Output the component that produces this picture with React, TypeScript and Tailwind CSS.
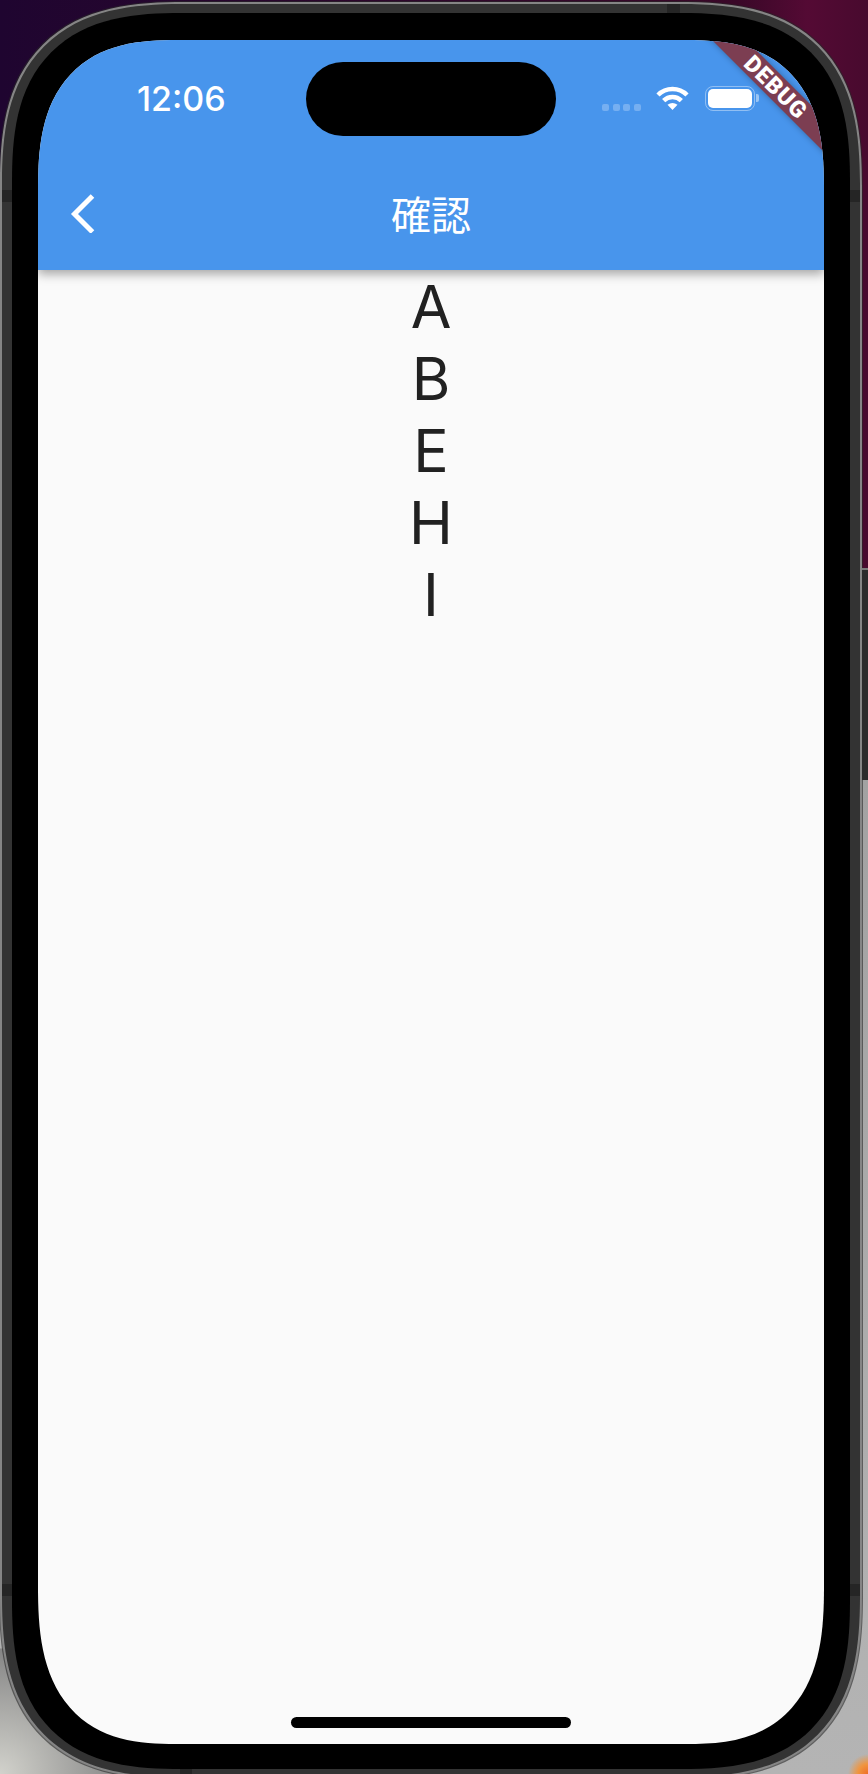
export default function App() {
  return (
    <div className="flex w-[868px] h-[1774px] overflow-hidden font-['Inter','Noto_Sans_CJK_JP',sans-serif] bg-[radial-gradient(circle_at_868px_1774px,#ee6f28_0,#f0953f_10px,transparent_20px),radial-gradient(circle_at_0_1774px,#d2d2cc_0,#858585_125px,transparent_126px),linear-gradient(180deg,transparent_780px,#a2a2a2_780px,#b4b4b4_100%),linear-gradient(90deg,#1f0530_0%,#3a0828_85%,#540a34_93%,#480a2e_100%)]">
      <div className="shrink-0 w-[862px] h-[1777px] mt-[2px] rounded-[185px] [corner-shape:superellipse(1.4)] border-2 border-[#858585] [background:linear-gradient(#252525,#252525)_665px_0/13px_9px_no-repeat,linear-gradient(#252525,#252525)_178px_1765px/12px_12px_no-repeat,linear-gradient(#252525,#252525)_0_186px/10px_12px_no-repeat,linear-gradient(#252525,#252525)_848px_186px/10px_12px_no-repeat,linear-gradient(#252525,#252525)_0_1580px/10px_12px_no-repeat,linear-gradient(#252525,#252525)_848px_1580px/10px_12px_no-repeat,#333333] pt-[9px] px-[10px] shadow-[0_0_0_1px_rgba(40,40,40,0.6)]">
        <div className="w-[838px] h-[1756px] rounded-[170px] [corner-shape:superellipse(1.4)] bg-black pt-[27px] px-[26px]">
          <div className="relative w-[786px] h-[1704px] overflow-hidden rounded-t-[140px_150px] rounded-b-[138px_158px] [corner-shape:superellipse(1.4)] bg-[#fafafa] flex flex-col">
            <header className="h-[230px] shrink-0 bg-[#4895ec] flex flex-col shadow-[0_4px_10px_rgba(0,0,0,0.35)] z-10">
              <div className="flex pt-[22px]">
                <div className="w-[268px] h-[74px] flex items-center pl-[99px]">
                  <span className="text-white text-[34px] font-medium leading-none">12:06</span>
                </div>
                <div className="w-[250px] h-[74px] rounded-full bg-black" />
                <div className="w-[268px] h-[74px] flex items-center pl-[46px]">
                  <div className="flex gap-[3.7px] mt-[17px]">
                    <span className="w-[7px] h-[7px] rounded-[2px] bg-white/25" />
                    <span className="w-[7px] h-[7px] rounded-[2px] bg-white/25" />
                    <span className="w-[7px] h-[7px] rounded-[2px] bg-white/25" />
                    <span className="w-[7px] h-[7px] rounded-[2px] bg-white/25" />
                  </div>
                  <svg viewBox="0 0 33 24" className="w-[33px] h-[24px] ml-[15px] mt-[-2px]">
                    <path d="M2 9A20.5 20.5 0 0 1 31 9" fill="none" stroke="#fff" strokeWidth="4.5" />
                    <path d="M7.66 14.66A12.5 12.5 0 0 1 25.34 14.66" fill="none" stroke="#fff" strokeWidth="4.5" />
                    <path d="M16.5 24L11.5 18.8Q16.5 15.2 21.5 18.8Z" fill="#fff" />
                  </svg>
                  <div className="flex items-center ml-[16px] mt-[-2px]">
                    <div className="w-[50px] h-[25px] rounded-[8px] border-[1.5px] border-white/40 p-[2px]">
                      <div className="w-full h-full rounded-[5px] bg-white" />
                    </div>
                    <span className="w-[3px] h-[8px] ml-[1px] rounded-r-[2px] bg-white/45" />
                  </div>
                </div>
              </div>
              <div className="grid grid-cols-3 h-[72px] mt-[42px] items-center">
                <div className="pl-[31px]">
                  <svg viewBox="0 0 26 40" className="w-[26px] h-[40px] block mt-[-2px]">
                    <path d="M23.5 3L5.5 21L23.5 39" fill="none" stroke="#fff" strokeWidth="5" />
                  </svg>
                </div>
                <div className="text-center text-white text-[40px] leading-none font-['Noto_Sans_CJK_JP',sans-serif] font-normal mt-[-3px]">確認</div>
                <div />
              </div>
            </header>
            <main className="flex flex-col items-center pt-[1px] text-[#212121] text-[59px] leading-[72px]">
              <span>A</span>
              <span>B</span>
              <span>E</span>
              <span>H</span>
              <span>I</span>
            </main>
            <div className="mt-auto mb-[16px] mx-auto w-[280px] h-[11px] rounded-full bg-black" />
            <div className="absolute left-[588px] top-[35px] w-[300px] h-[24px] rotate-45 z-20 bg-[#7c3e52] shadow-[0_0_6px_rgba(0,0,0,0.3)] flex items-center justify-center">
              <span className="text-white text-[23px] leading-none font-black font-['Roboto',sans-serif] tracking-[1px]">DEBUG</span>
            </div>
          </div>
        </div>
      </div>
      <div className="flex-1 flex flex-col">
        <div className="h-[568px] shrink-0" />
        <div className="h-[212px] shrink-0 bg-[#2c2c2c] border-t-2 border-[#7a7a7a]" />
      </div>
    </div>
  );
}
